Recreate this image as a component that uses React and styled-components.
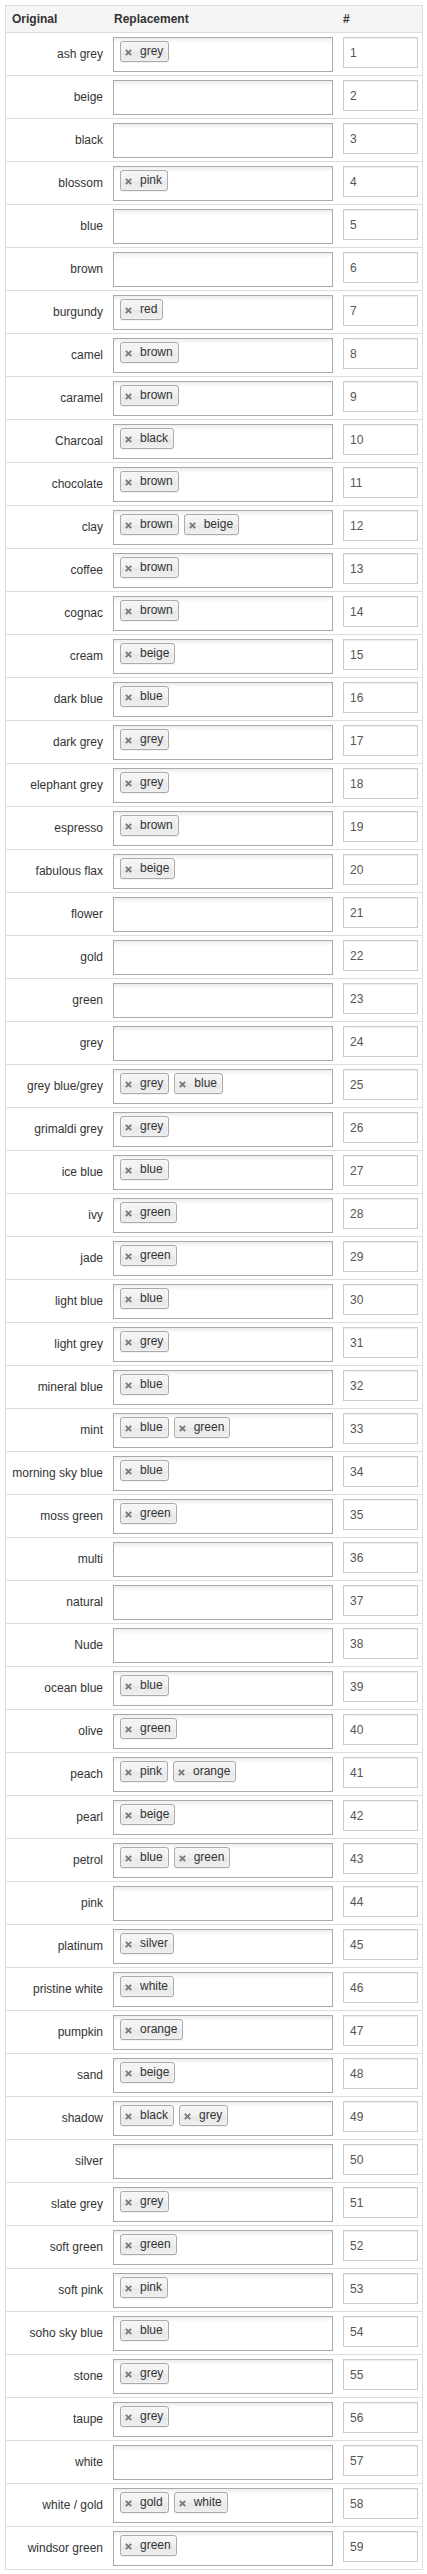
import React from "react";
import styled, { createGlobalStyle } from "styled-components";

const GlobalStyle = createGlobalStyle`
  html, body { margin: 0; padding: 0; background: #fff; }
  body {
    font-family: "Liberation Sans", Arial, sans-serif;
    font-size: 12px;
    color: #333;
  }
`;

const Page = styled.div`
  padding: 5px 5px 4px 5px;
`;

const Table = styled.table`
  width: 418px;
  table-layout: fixed;
  border-collapse: separate;
  border-spacing: 0;
  border: 1px solid #ddd;
  border-bottom: none;
`;

const HeadCell = styled.th`
  background: #f5f5f5;
  border-bottom: 1px solid #ddd;
  padding: 6px 5px 6px ${(p) => p.$pl || 6}px;
  line-height: 14px;
  font-size: 12px;
  font-weight: bold;
  text-align: left;
  color: #333;
`;

const Cell = styled.td`
  border-bottom: 1px solid #ddd;
  padding: 4px ${(p) => p.$pr || 5}px 3px 5px;
  height: 35px;
  vertical-align: top;
`;

const LabelCell = styled(Cell)`
  vertical-align: middle;
  text-align: right;
  padding-top: 3px;
  padding-right: 5px;
  line-height: 14px;
  color: #333;
  white-space: nowrap;
`;

const Choices = styled.ul`
  box-sizing: border-box;
  width: 220px;
  height: 35px;
  margin: 0;
  padding: 0 0 0 1px;
  list-style: none;
  display: flex;
  align-items: flex-start;
  border: 1px solid #aaa;
  background-color: #fff;
  background-image: linear-gradient(to bottom, #eee 1%, #fff 15%);
  overflow: hidden;
`;

const Tag = styled.li`
  display: inline-flex;
  align-items: center;
  margin: 3px 0 3px 5px;
  padding: 3px 5px 3px 3px;
  line-height: 13px;
  font-size: 12px;
  color: #333;
  border: 1px solid #aaa;
  border-radius: 3px;
  background-color: #e4e4e4;
  background-image: linear-gradient(
    to bottom,
    #f4f4f4 20%,
    #f0f0f0 50%,
    #e8e8e8 52%,
    #eee 100%
  );
  box-shadow: 0 0 2px #fff inset, 0 1px 0 rgba(0, 0, 0, 0.05);
  white-space: nowrap;
`;

const CloseIcon = styled.svg`
  width: 7px;
  height: 7px;
  margin: 1px 8px 0 1px;
  flex: none;
`;

const NumberInput = styled.input`
  box-sizing: border-box;
  width: 75px;
  height: 31px;
  margin: 0;
  padding: 0 6px;
  border: 1px solid #ccc;
  border-radius: 0;
  box-shadow: inset 0 1px 1px rgba(0, 0, 0, 0.075);
  font-family: "Liberation Sans", Arial, sans-serif;
  font-size: 12px;
  color: #555;
  background: #fff;
  outline: none;
  display: block;
`;

const rows = [
  ["ash grey", ["grey"]],
  ["beige", []],
  ["black", []],
  ["blossom", ["pink"]],
  ["blue", []],
  ["brown", []],
  ["burgundy", ["red"]],
  ["camel", ["brown"]],
  ["caramel", ["brown"]],
  ["Charcoal", ["black"]],
  ["chocolate", ["brown"]],
  ["clay", ["brown", "beige"]],
  ["coffee", ["brown"]],
  ["cognac", ["brown"]],
  ["cream", ["beige"]],
  ["dark blue", ["blue"]],
  ["dark grey", ["grey"]],
  ["elephant grey", ["grey"]],
  ["espresso", ["brown"]],
  ["fabulous flax", ["beige"]],
  ["flower", []],
  ["gold", []],
  ["green", []],
  ["grey", []],
  ["grey blue/grey", ["grey", "blue"]],
  ["grimaldi grey", ["grey"]],
  ["ice blue", ["blue"]],
  ["ivy", ["green"]],
  ["jade", ["green"]],
  ["light blue", ["blue"]],
  ["light grey", ["grey"]],
  ["mineral blue", ["blue"]],
  ["mint", ["blue", "green"]],
  ["morning sky blue", ["blue"]],
  ["moss green", ["green"]],
  ["multi", []],
  ["natural", []],
  ["Nude", []],
  ["ocean blue", ["blue"]],
  ["olive", ["green"]],
  ["peach", ["pink", "orange"]],
  ["pearl", ["beige"]],
  ["petrol", ["blue", "green"]],
  ["pink", []],
  ["platinum", ["silver"]],
  ["pristine white", ["white"]],
  ["pumpkin", ["orange"]],
  ["sand", ["beige"]],
  ["shadow", ["black", "grey"]],
  ["silver", []],
  ["slate grey", ["grey"]],
  ["soft green", ["green"]],
  ["soft pink", ["pink"]],
  ["soho sky blue", ["blue"]],
  ["stone", ["grey"]],
  ["taupe", ["grey"]],
  ["white", []],
  ["white / gold", ["gold", "white"]],
  ["windsor green", ["green"]],
];

function Close() {
  return (
    <CloseIcon viewBox="0 0 7 7" aria-hidden="true">
      <path
        d="M0.8 0.8 L6.2 6.2 M6.2 0.8 L0.8 6.2"
        stroke="#7a7a7a"
        strokeWidth="1.9"
        strokeLinecap="butt"
        fill="none"
      />
    </CloseIcon>
  );
}

export default function App() {
  return (
    <>
      <GlobalStyle />
      <Page>
        <Table>
          <colgroup>
            <col style={{ width: 102 }} />
            <col style={{ width: 230 }} />
            <col style={{ width: 84 }} />
          </colgroup>
          <thead>
            <tr>
              <HeadCell>Original</HeadCell>
              <HeadCell>Replacement</HeadCell>
              <HeadCell $pl={5}>#</HeadCell>
            </tr>
          </thead>
          <tbody>
            {rows.map(([name, tags], i) => (
              <tr key={name}>
                <LabelCell>{name}</LabelCell>
                <Cell>
                  <Choices>
                    {tags.map((t) => (
                      <Tag key={t}>
                        <Close />
                        {t}
                      </Tag>
                    ))}
                  </Choices>
                </Cell>
                <Cell $pr={4}>
                  <NumberInput type="text" defaultValue={String(i + 1)} readOnly />
                </Cell>
              </tr>
            ))}
          </tbody>
        </Table>
      </Page>
    </>
  );
}
